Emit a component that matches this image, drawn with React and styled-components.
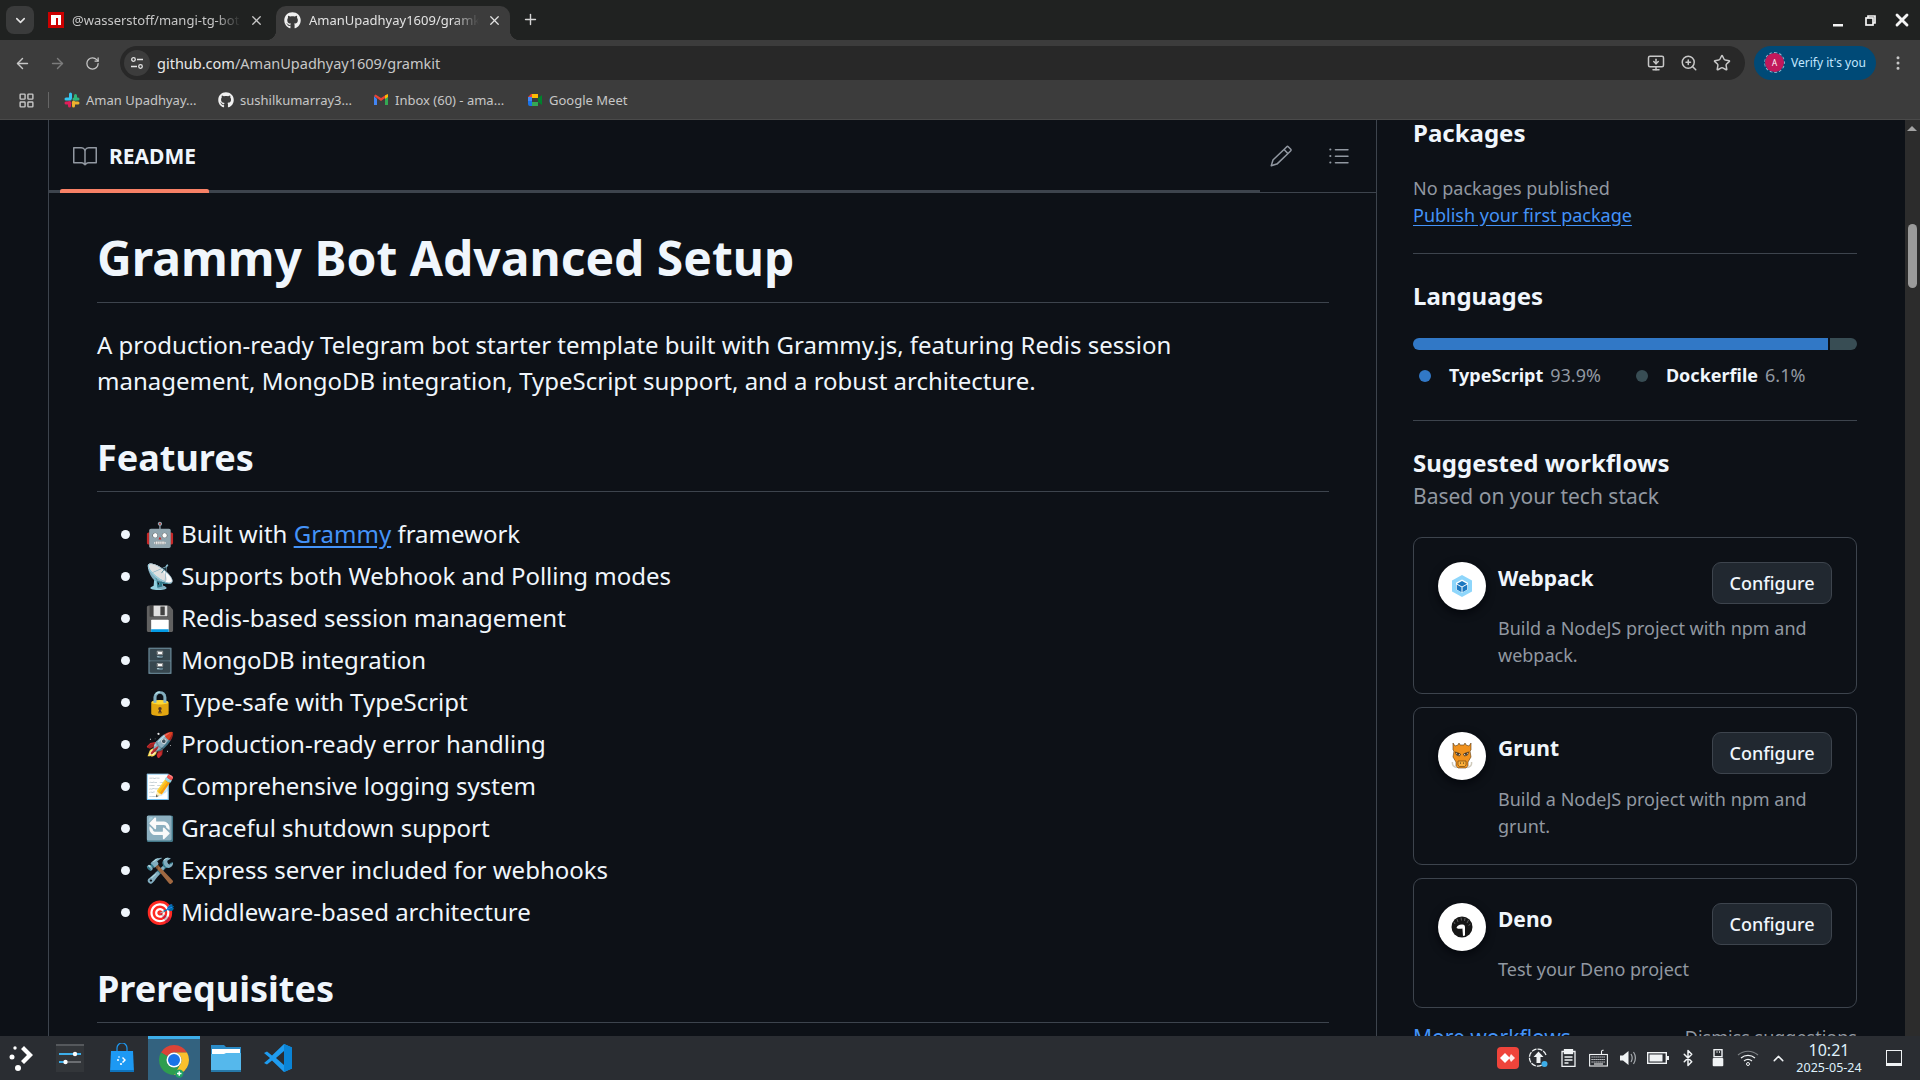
import React from "react"
import styled, { createGlobalStyle } from "styled-components"
import { FaGithub } from "react-icons/fa"
import { GoBook, GoPencil, GoListUnordered } from "react-icons/go"
import {
  ArrowLeft,
  ArrowRight,
  RotateCw,
  MonitorDown,
  ZoomIn,
  Star,
  Plus,
  X,
  ChevronDown,
  ChevronUp,
  LayoutGrid,
  EllipsisVertical,
  Bluetooth,
} from "lucide-react"

const GlobalStyle = createGlobalStyle`
  html, body {
    margin: 0;
    padding: 0;
    height: 100%;
    overflow: hidden;
    background: #0d1117;
  }
  body {
    font-family: "Noto Sans", "Noto Color Emoji", sans-serif;
    color: #f0f6fc;
  }
  * { box-sizing: border-box; }
`

const Screen = styled.div`
  display: flex;
  flex-direction: column;
  width: 1920px;
  height: 1080px;
  overflow: hidden;
`

/* browser chrome */
const TabStrip = styled.div`
  display: flex;
  align-items: flex-end;
  flex: none;
  height: 40px;
  padding-left: 6px;
  background: #202221;
`
const TabMenu = styled.div`
  display: flex;
  align-items: center;
  justify-content: center;
  align-self: flex-start;
  width: 28px;
  height: 28px;
  margin: 6px 8px 0 0;
  border-radius: 8px;
  background: #3a3b3b;
  color: #e3e3e3;
`
const Tab = styled.div`
  position: relative;
  display: flex;
  align-items: center;
  width: ${(props) => props.$width}px;
  height: 34px;
  padding: ${(props) => props.$pad};
  gap: 8px;
  border-radius: 10px 10px 0 0;
  font-size: 13px;
  color: ${(props) => (props.$active ? "#e3e3e3" : "#c7c7c7")};
  background: ${(props) => (props.$active ? "#3c3c3c" : "transparent")};

  ${(props) =>
    props.$active &&
    `
    &::before, &::after {
      content: "";
      position: absolute;
      bottom: 0;
      width: 10px;
      height: 10px;
    }
    &::before {
      left: -10px;
      background: radial-gradient(circle at 0 0, transparent 10px, #3c3c3c 10.5px);
    }
    &::after {
      right: -10px;
      background: radial-gradient(circle at 100% 0, transparent 10px, #3c3c3c 10.5px);
    }
  `}
`
const TabTitle = styled.span`
  flex: 1;
  overflow: hidden;
  white-space: nowrap;
  -webkit-mask-image: linear-gradient(to right, #000 85%, transparent 100%);
  mask-image: linear-gradient(to right, #000 85%, transparent 100%);
`
const NewTab = styled.div`
  display: flex;
  align-self: flex-start;
  margin: 11px 0 0 12px;
  color: #d5d5d5;
`
const WindowControls = styled.div`
  display: flex;
  align-items: center;
  align-self: flex-start;
  height: 40px;
  margin-left: auto;
  padding-right: 2px;
  color: #f4f4f4;
`
const WindowButton = styled.div`
  display: flex;
  align-items: center;
  justify-content: center;
  width: 32px;
`
const Toolbar = styled.div`
  display: flex;
  align-items: flex-start;
  flex: none;
  height: 41px;
  padding: 6px 12px 0 10px;
  background: #3c3c3c;
  color: #c7c7c7;
`
const NavButtons = styled.div`
  display: flex;
  align-items: center;
  gap: 18.5px;
  width: 110px;
  height: 34px;
  padding-left: 3.5px;
  color: #c7c7c7;
`
const Omnibox = styled.div`
  display: flex;
  align-items: center;
  width: 1625px;
  height: 34px;
  padding: 0 14px 0 4px;
  border-radius: 17px;
  background: #282828;
`
const SiteInfo = styled.div`
  display: flex;
  align-items: center;
  justify-content: center;
  width: 26px;
  height: 26px;
  border-radius: 50%;
  background: #3c3c3c;
  color: #e3e3e3;
`
const Url = styled.div`
  margin-left: 7px;
  padding-bottom: 1px;
  font-size: 14.5px;
  color: #c7c7c7;

  b {
    font-weight: 400;
    color: #e8e8e8;
  }
`
const OmniIcons = styled.div`
  display: flex;
  align-items: center;
  gap: 15px;
  margin-left: auto;
  color: #c7c7c7;
`
const ProfileChip = styled.div`
  display: flex;
  align-items: center;
  gap: 7px;
  width: 122px;
  height: 34px;
  margin-left: 9px;
  padding: 0 0 1px 11px;
  border-radius: 17px;
  background: #004a77;
  color: #c2e7ff;
  font-size: 12px;
  white-space: nowrap;
`
const ProfileAvatar = styled.div`
  display: flex;
  align-items: center;
  justify-content: center;
  width: 19px;
  height: 19px;
  border-radius: 50%;
  outline: 1px dashed #8fb4cc;
  background: #c2185b;
  color: #fff;
  font-size: 8px;
`
const Kebab = styled.div`
  display: flex;
  align-items: center;
  height: 34px;
  margin-left: 13px;
  color: #c7c7c7;
`
const BookmarkBar = styled.div`
  display: flex;
  align-items: center;
  flex: none;
  height: 39px;
  padding-left: 18px;
  background: #3c3c3c;
  border-bottom: 1px solid #4a4a4a;
  font-size: 13px;
  color: #c7c7c7;
`
const BarSeparator = styled.div`
  width: 1px;
  height: 16px;
  margin: 0 15px 0 13px;
  background: #666;
`
const Bookmark = styled.div`
  display: flex;
  align-items: center;
  gap: 6px;
  width: ${(props) => props.$width}px;
  white-space: nowrap;
`

/* page */
const Page = styled.div`
  display: grid;
  grid-template-columns: 48px 1329px minmax(0, 1fr) 15px;
  flex: 1;
  min-height: 0;
  overflow: hidden;
  background: #0d1117;
`
const ReadmeBox = styled.section`
  min-height: 0;
  border-left: 1px solid #3d444d;
  border-right: 1px solid #3d444d;
`
const ReadmeHeader = styled.div`
  position: relative;
  display: flex;
  align-items: center;
  height: 73px;
  padding: 0 24px;
  border-bottom: 1px solid #3d444d;
  color: #9198a1;

  &::before {
    content: "";
    position: absolute;
    left: 0;
    bottom: -1px;
    width: 1211px;
    height: 3px;
    background: #3d444d;
  }
`
const ReadmeTab = styled.div`
  display: flex;
  align-items: center;
  gap: 12px;
  font-size: 21px;
  font-weight: 700;
  color: #f0f6fc;

  &::after {
    content: "";
    position: absolute;
    left: 11px;
    bottom: -1px;
    width: 149px;
    height: 4px;
    background: #f78166;
    border-radius: 2px 2px 0 0;
  }
`
const HeaderActions = styled.div`
  display: flex;
  align-items: center;
  gap: 33px;
  margin-left: auto;
`
const Markdown = styled.article`
  padding: 35px 47px 0 48px;
  font-size: 24px;
  line-height: 36px;
`
const H1 = styled.h1`
  margin: 0 0 24px;
  padding-bottom: 14.4px;
  border-bottom: 1px solid #3d444d;
  font-size: 48px;
  line-height: 60px;
  font-weight: 700;
`
const H2 = styled.h2`
  margin: 36px 0 24px;
  padding-bottom: 10.8px;
  border-bottom: 1px solid #3d444d;
  font-size: 36px;
  line-height: 45px;
  font-weight: 700;
`
const Paragraph = styled.p`
  margin: 0 0 24px;
`
const List = styled.ul`
  margin: 0 0 24px;
  padding-left: 48px;
`
const Item = styled.li`
  height: 36px;
  margin-top: ${(props) => (props.$first ? 0 : 6)}px;
`
const Link = styled.a`
  color: #4493f8;
  text-decoration: underline;
  text-underline-offset: 3px;
`

/* right column */
const Sidebar = styled.aside`
  padding: 0 48px 0 36px;
  margin-top: -5px;
  font-size: 18px;
  line-height: 27px;
`
const SideTitle = styled.h2`
  margin: 0;
  font-size: 24px;
  line-height: 36px;
  font-weight: 700;
`
const Muted = styled.div`
  margin-top: ${(props) => props.$top || 0}px;
  font-size: ${(props) => props.$size || 18}px;
  color: #9198a1;
`
const SideRule = styled.hr`
  height: 1px;
  margin: ${(props) => props.$top}px 0 24px;
  border: 0;
  background: #3d444d;
`
const LangBar = styled.div`
  display: flex;
  gap: 2px;
  height: 12px;
  margin-top: 24px;
  border-radius: 6px;
  overflow: hidden;
`
const LangPart = styled.span`
  display: block;
  width: ${(props) => props.$pct}%;
  background: ${(props) => props.$color};
`
const Legend = styled.div`
  display: flex;
  gap: 35px;
  margin-top: 12.5px;
  padding-left: 6px;
`
const LegendItem = styled.div`
  display: flex;
  align-items: center;
  color: #9198a1;

  b {
    margin-right: 7px;
    font-weight: 700;
    color: #f0f6fc;
  }
`
const Dot = styled.span`
  width: 12px;
  height: 12px;
  margin-right: 18px;
  border-radius: 50%;
  background: ${(props) => props.$color};
`
const Cards = styled.div`
  display: flex;
  flex-direction: column;
  gap: 13px;
  margin-top: 27px;
`
const Card = styled.div`
  display: flex;
  gap: 12px;
  padding: 24px;
  border: 1px solid #3d444d;
  border-radius: 9px;
`
const CardLogo = styled.div`
  display: flex;
  align-items: center;
  justify-content: center;
  flex: none;
  width: 48px;
  height: 48px;
  border-radius: 50%;
  background: #fff;
  box-shadow: 0 3px 9px rgba(1, 4, 9, 0.8);
`
const CardBody = styled.div`
  flex: 1;
`
const CardHead = styled.div`
  display: flex;
  justify-content: space-between;
  align-items: flex-start;
  margin-bottom: 11.5px;
`
const CardName = styled.div`
  font-size: 21px;
  line-height: 32px;
  font-weight: 700;
`
const ConfigureButton = styled.button`
  width: 120px;
  height: 42px;
  padding: 0;
  border: 1px solid #3d444d;
  border-radius: 9px;
  background: #212830;
  color: #f0f6fc;
  font: 500 18px "Noto Sans", sans-serif;
`
const CardFoot = styled.div`
  display: flex;
  justify-content: space-between;
  margin-top: 16px;
`
const FootLink = styled.a`
  color: #4493f8;
  font-size: 21px;
`
const Scrollbar = styled.div`
  position: relative;
  background: #2c2c2c;
`
const ScrollThumb = styled.div`
  position: absolute;
  left: 3px;
  top: 104px;
  width: 9px;
  height: 64px;
  border-radius: 5px;
  background: #9b9b9b;
`
const ScrollArrow = styled.div`
  position: absolute;
  left: 2px;
  ${(props) => (props.$down ? "bottom: 4px" : "top: 6px")};
  border-left: 5px solid transparent;
  border-right: 5px solid transparent;
  ${(props) => (props.$down ? "border-top: 5px solid #a3a3a3" : "border-bottom: 5px solid #a3a3a3")};
`

/* taskbar */
const Taskbar = styled.div`
  display: flex;
  align-items: center;
  flex: none;
  height: 44px;
  background: #2a2d32;
  color: #f0f3f5;
`
const TaskSlot = styled.div`
  display: flex;
  align-items: center;
  justify-content: center;
  width: ${(props) => props.$width || 52}px;
  height: 44px;
  background: ${(props) => (props.$active ? "#33627f" : "transparent")};
  border-top: ${(props) => (props.$active ? "3px solid #3daee9" : "0")};
`
const Tray = styled.div`
  display: flex;
  align-items: center;
  gap: 10px;
  margin-left: auto;
  padding-right: 18px;
`
const TrayIcon = styled.div`
  display: flex;
  justify-content: center;
  width: 20px;
  color: #f0f3f5;

  svg {
    flex: none;
  }
`
const Clock = styled.div`
  width: 78px;
  margin-left: -8px;
  text-align: center;
  color: #dff0fa;
`
const ClockTime = styled.div`
  font-size: 16px;
  line-height: 19px;
`
const ClockDate = styled.div`
  font-size: 12.5px;
  line-height: 15px;
`
const ShowDesktop = styled.div`
  width: 16px;
  height: 16px;
  margin-left: 8px;
  border: 1.5px solid #f0f3f5;
  border-bottom-width: 3px;
`

const NpmIcon = () => (
  <svg width="16" height="16" viewBox="0 0 16 16">
    <rect width="16" height="16" fill="#cb0000" />
    <path d="M3 3h10v10h-3V6H8v7H3z" fill="#fff" />
  </svg>
)
const SlackIcon = () => (
  <svg width="16" height="16" viewBox="0 0 16 16">
    <rect x="5" y="0.5" width="3" height="7" rx="1.5" fill="#36c5f0" />
    <rect x="0.5" y="5.5" width="7" height="3" rx="1.5" fill="#36c5f0" />
    <rect x="10" y="2" width="3" height="6.5" rx="1.5" fill="#2eb67d" />
    <rect x="8.5" y="5.5" width="7" height="3" rx="1.5" fill="#2eb67d" />
    <rect x="8" y="8.5" width="3" height="7" rx="1.5" fill="#ecb22e" />
    <rect x="8.5" y="9.5" width="7" height="3" rx="1.5" fill="#ecb22e" />
    <rect x="4" y="9" width="3" height="6.5" rx="1.5" fill="#e01e5a" />
    <rect x="0.5" y="9.5" width="7" height="3" rx="1.5" fill="#e01e5a" />
  </svg>
)
const GmailIcon = () => (
  <svg width="16" height="16" viewBox="0 0 16 16">
    <path d="M1 4v9h3V7z" fill="#4285f4" />
    <path d="M12 7v6h3V4z" fill="#34a853" />
    <path d="M1 4l7 5 7-5-1.5-1.5L8 6 2.5 2.5z" fill="#ea4335" />
    <path d="M12 3.5L15 2v3l-3 2z" fill="#fbbc04" />
  </svg>
)
const MeetIcon = () => (
  <svg width="16" height="16" viewBox="0 0 16 16">
    <path d="M4 2h7v4H5v3H1V5z" fill="#ea4335" />
    <path d="M1 5h4v6H1z" fill="#4285f4" />
    <path d="M1 9h4v2h6v3H3a2 2 0 0 1-2-2z" fill="#1a73e8" />
    <path d="M11 2v4H5V2z" fill="#fbbc04" />
    <path d="M5 10h6v4H5z" fill="#34a853" />
    <path d="M11 6l4-3v10l-4-3z" fill="#00832d" />
  </svg>
)
const WebpackLogo = () => (
  <svg width="24" height="24" viewBox="0 0 24 24">
    <path d="M12 1l10 5.5v11L12 23 2 17.5v-11z" fill="#8ed6fb" />
    <path d="M12 5.5l6 3.3v6.6l-6 3.3-6-3.3V8.8z" fill="#fff" />
    <path d="M12 7l5 2.8-5 2.8-5-2.8zM6.7 10.6l4.8 2.7v5l-4.8-2.7zM17.3 10.6v5l-4.8 2.7v-5z" fill="#1c78c0" />
  </svg>
)
const GruntLogo = () => (
  <svg width="22" height="28" viewBox="0 0 22 28">
    <path d="M2 1l2 3 3-1 1-2 1 2h4l1-2 1 2 3 1 2-3 0 7-1 1 1 6-3 5v4l-2 2H7l-2-2v-4l-3-5 1-6-1-1z" fill="#f0921e" stroke="#5a3a10" strokeWidth=".6" />
    <path d="M4.5 10l5 2-1 2-3-1zM17.5 10l-5 2 1 2 3-1z" fill="#fff" stroke="#3a2508" strokeWidth=".8" />
    <circle cx="7" cy="12" r="1" fill="#22160a" />
    <circle cx="15" cy="12" r="1" fill="#22160a" />
    <path d="M7 19h8v4l-1.5 1.5h-5L7 23z" fill="#fbb03b" stroke="#5a3a10" strokeWidth=".6" />
    <path d="M9.5 21h.01M12.5 21h.01" stroke="#22160a" strokeWidth="1.2" strokeLinecap="round" />
    <path d="M1.5 20c-.5 3 1 5 4.5 5.5M20.5 20c.5 3-1 5-4.5 5.5" stroke="#cfcabb" strokeWidth="1.5" fill="none" />
  </svg>
)
const DenoLogo = () => (
  <svg width="22" height="22" viewBox="0 0 22 22">
    <circle cx="11" cy="11" r="10.5" fill="#161616" />
    <path d="M3 6l1 2M6 3l1 3M10 1.5l.5 3M14 2l-.5 3M17.5 4l-1.5 3M19.5 8l-2 1.5" stroke="#777" strokeWidth=".7" />
    <path d="M5.5 12c.5-2.500 3-3.800 6-3.500 1.800.2 2.500 1.200 2.500 2.800v8.200l-2 .6-.6-7.600c-2 .5-4 .5-5.900-.5z" fill="#fff" />
  </svg>
)
const KdeLogo = () => (
  <svg width="26" height="30" viewBox="0 0 26 30">
    <circle cx="6" cy="5" r="1.7" fill="#fff" />
    <circle cx="3" cy="14" r="2.5" fill="#fff" />
    <circle cx="9" cy="25" r="3" fill="#fff" />
    <path d="M15 3l9 9-9 9-3-3 6-6-6-6z" fill="#fff" />
  </svg>
)
const SettingsLogo = () => (
  <svg width="28" height="28" viewBox="0 0 28 28">
    <rect width="28" height="28" fill="#33363a" />
    <path d="M0 0h28v2H0z" fill="#55585c" />
    <rect x="3" y="9" width="22" height="2" fill="#3daee9" />
    <rect x="3" y="17" width="22" height="2" fill="#6b6e72" />
    <rect x="3" y="17" width="8" height="2" fill="#3daee9" />
    <circle cx="19" cy="10" r="2.2" fill="#fcfcfc" />
    <circle cx="9.5" cy="18" r="2.2" fill="#fcfcfc" />
  </svg>
)
const StoreLogo = () => (
  <svg width="24" height="30" viewBox="0 0 24 30">
    <path d="M7 8V5a5 5 0 0 1 10 0v3" stroke="#1d99f3" strokeWidth="1.2" fill="none" />
    <path d="M1 8h22l1 21H0z" fill="#1d99f3" />
    <path d="M0 27h24v2H0z" fill="#0e73bd" />
    <path d="M13 14l3 3-3 3-1-1 2-2-2-2z" fill="#fff" />
    <circle cx="9" cy="14" r=".8" fill="#fff" />
    <circle cx="8" cy="17" r="1" fill="#fff" />
    <circle cx="11" cy="21" r="1.1" fill="#fff" />
  </svg>
)
const ChromeLogo = () => (
  <svg width="36" height="36" viewBox="0 0 48 48">
    <path d="M24 4A20 20 0 0 1 41.32 14H24a10 10 0 0 0-8.66 5L6.68 14A20 20 0 0 1 24 4z" fill="#db4437" />
    <path d="M41.32 14A20 20 0 0 1 24 44L32.66 29A10 10 0 0 0 24 14z" fill="#fbc02d" />
    <path d="M24 44A20 20 0 0 1 6.68 14L15.34 19A10 10 0 0 0 32.66 29z" fill="#2e9e4f" />
    <circle cx="24" cy="24" r="10" fill="#fff" />
    <circle cx="24" cy="24" r="8" fill="#1a73e8" />
    <circle cx="31" cy="42" r="5.5" fill="#1fa463" />
    <path d="M31 39v6M28 42h6" stroke="#fff" strokeWidth="1.8" />
  </svg>
)
const FolderLogo = () => (
  <svg width="30" height="28" viewBox="0 0 30 28">
    <path d="M0 1h13l2 2h15v25H0z" fill="#2a8bc7" />
    <rect x="1" y="5" width="28" height="5" fill="#fff" />
    <path d="M0 10h13l2-1h15v19H0z" fill="#55b8ec" />
    <path d="M0 26h30v2H0z" fill="#2678a8" />
  </svg>
)
const VsCodeLogo = () => (
  <svg width="28" height="28" viewBox="0 0 28 28">
    <path d="M20 0l8 3.5v21L20 28 8 16.5l-5 4-3-1.500 6-5-6-5 3-1.500 5 4z" fill="#1f9cf0" />
    <path d="M20 7l-8 7 8 7z" fill="#2a2d32" />
    <path d="M20 0l8 3.5v21L20 28z" fill="#0a84d6" />
  </svg>
)
const AnyDeskIcon = () => (
  <svg width="22" height="22" viewBox="0 0 22 22">
    <rect width="22" height="22" rx="4" fill="#ef443b" />
    <path d="M8 6l5 5-5 5-5-5z" fill="#fff" />
    <path d="M14 7l4 4-4 4-2-4z" fill="#fff" opacity=".9" />
  </svg>
)
const UpdateIcon = () => (
  <svg width="22" height="22" viewBox="0 0 22 22" fill="none">
    <path d="M19 8a8.5 8.5 0 1 0-2.5 9" stroke="#f0f3f5" strokeWidth="1.3" strokeDasharray="5 1" />
    <path d="M11.5 4.5l5 5.500h-3v6h-4v-6h-3z" fill="#f0f3f5" />
    <circle cx="17.5" cy="17" r="3" fill="#3daee9" />
  </svg>
)
const ClipboardIcon = () => (
  <svg width="15" height="18" viewBox="0 0 15 18" fill="none" stroke="#f0f3f5" strokeWidth="1.3">
    <path d="M4 2.5H1v15h13v-15h-3" />
    <rect x="3.5" y=".5" width="8" height="4" fill="#f0f3f5" />
    <path d="M3.5 8h8M3.5 11h8M3.5 14h4" />
  </svg>
)
const KeyboardIcon = () => (
  <svg width="19" height="18" viewBox="0 0 19 18" fill="none" stroke="#f0f3f5" strokeWidth="1.1">
    <path d="M12.5 5V2.500c0-1 1-1 2-1.500" />
    <rect x=".6" y="5.5" width="17.8" height="11.5" />
    <path d="M2.5 8h14M2.500 10.500h14M2.500 13h14" strokeDasharray="1.2 .8" />
    <path d="M5 15h9" />
  </svg>
)
const VolumeIcon = () => (
  <svg width="18" height="18" viewBox="0 0 18 18" fill="none">
    <path d="M1 6.5h3L9.500 2v14L4 11.500H1z" fill="#f0f3f5" />
    <path d="M12 5c1.500 2.500 1.500 5.500 0 8M14.500 3c2.500 3.500 2.500 8.500 0 12" stroke="#a9adb1" strokeWidth="1.2" />
  </svg>
)
const BatteryIcon = () => (
  <svg width="22" height="12" viewBox="0 0 22 12">
    <rect x=".7" y=".7" width="18.6" height="10.6" fill="none" stroke="#f0f3f5" strokeWidth="1.4" />
    <rect x="2.5" y="2.5" width="13" height="7" fill="#f0f3f5" />
    <rect x="20" y="4" width="2" height="4" fill="#f0f3f5" />
  </svg>
)
const UsbIcon = () => (
  <svg width="12" height="18" viewBox="0 0 12 18" fill="none">
    <rect x="2" y=".7" width="8" height="7" stroke="#f0f3f5" strokeWidth="1.4" />
    <path d="M4.5 3h1M7 3h1" stroke="#f0f3f5" strokeWidth="1.4" />
    <rect x=".7" y="9" width="10.6" height="8.3" rx="1" fill="#f0f3f5" />
  </svg>
)
const WifiIcon = () => (
  <svg width="22" height="16" viewBox="0 0 22 16" fill="none">
    <path d="M1 5c6-5 14-5 20 0" stroke="#7d8185" strokeWidth="1.2" />
    <path d="M4 8c4-3.500 10-3.500 14 0" stroke="#f0f3f5" strokeWidth="1.2" />
    <path d="M7 11c2.500-2 5.500-2 8 0" stroke="#f0f3f5" strokeWidth="1.2" />
    <circle cx="11" cy="14" r="1.5" stroke="#f0f3f5" />
  </svg>
)
const MinimizeIcon = () => (
  <svg width="10" height="14" viewBox="0 0 10 14">
    <rect y="11" width="10" height="2.5" fill="currentColor" />
  </svg>
)
const RestoreIcon = () => (
  <svg width="11" height="11" viewBox="0 0 11 11" fill="none" stroke="currentColor" strokeWidth="1.7">
    <path d="M3 3V1h7v7H8" />
    <rect x="1" y="3" width="7" height="7" />
  </svg>
)

const FEATURES = [
  ["🤖", <>Built with <Link>Grammy</Link> framework</>],
  ["📡", "Supports both Webhook and Polling modes"],
  ["💾", "Redis-based session management"],
  ["🗄️", "MongoDB integration"],
  ["🔒", "Type-safe with TypeScript"],
  ["🚀", "Production-ready error handling"],
  ["📝", "Comprehensive logging system"],
  ["🔄", "Graceful shutdown support"],
  ["🛠️", "Express server included for webhooks"],
  ["🎯", "Middleware-based architecture"],
]

const WORKFLOWS = [
  { name: "Webpack", logo: <WebpackLogo />, text: "Build a NodeJS project with npm and webpack." },
  { name: "Grunt", logo: <GruntLogo />, text: "Build a NodeJS project with npm and grunt." },
  { name: "Deno", logo: <DenoLogo />, text: "Test your Deno project" },
]

const App = () => (
  <Screen>
    <GlobalStyle />
    <TabStrip>
      <TabMenu>
        <ChevronDown size={15} strokeWidth={2.5} />
      </TabMenu>
      <Tab $width={234} $pad="0 12px 6px 6px">
        <NpmIcon />
        <TabTitle>@wasserstoff/mangi-tg-bot</TabTitle>
        <X size={15} />
      </Tab>
      <Tab $width={234} $pad="0 8px 6px 8px" $active>
        <FaGithub size={17} color="#f0f0f0" />
        <TabTitle>AmanUpadhyay1609/gramkit</TabTitle>
        <X size={15} />
      </Tab>
      <NewTab>
        <Plus size={17} />
      </NewTab>
      <WindowControls>
        <WindowButton><MinimizeIcon /></WindowButton>
        <WindowButton><RestoreIcon /></WindowButton>
        <WindowButton><X size={20} strokeWidth={3.4} /></WindowButton>
      </WindowControls>
    </TabStrip>
    <Toolbar>
      <NavButtons>
        <ArrowLeft size={17} />
        <ArrowRight size={17} color="#7c7c7c" />
        <RotateCw size={15} />
      </NavButtons>
      <Omnibox>
        <SiteInfo>
          <svg width="14" height="14" viewBox="0 0 14 14" fill="none" stroke="currentColor" strokeWidth="1.3">
            <circle cx="3.5" cy="3.5" r="1.8" />
            <path d="M7 3.5h6M1 10.5h6" />
            <circle cx="10.5" cy="10.5" r="1.8" />
          </svg>
        </SiteInfo>
        <Url>
          <b>github.com</b>/AmanUpadhyay1609/gramkit
        </Url>
        <OmniIcons>
          <MonitorDown size={18} />
          <ZoomIn size={18} />
          <Star size={18} />
        </OmniIcons>
      </Omnibox>
      <ProfileChip>
        <ProfileAvatar>A</ProfileAvatar>
        Verify it's you
      </ProfileChip>
      <Kebab>
        <EllipsisVertical size={18} />
      </Kebab>
    </Toolbar>
    <BookmarkBar>
      <LayoutGrid size={17} />
      <BarSeparator />
      <Bookmark $width={154}><SlackIcon />Aman Upadhyay...</Bookmark>
      <Bookmark $width={155}><FaGithub size={16} color="#f0f0f0" />sushilkumarray3...</Bookmark>
      <Bookmark $width={154}><GmailIcon />Inbox (60) - ama...</Bookmark>
      <Bookmark $width={120}><MeetIcon />Google Meet</Bookmark>
    </BookmarkBar>

    <Page>
      <div />
      <ReadmeBox>
        <ReadmeHeader>
          <ReadmeTab>
            <GoBook size={24} color="#9198a1" />
            README
          </ReadmeTab>
          <HeaderActions>
            <GoPencil size={24} />
            <GoListUnordered size={26} />
          </HeaderActions>
        </ReadmeHeader>
        <Markdown>
          <H1>Grammy Bot Advanced Setup</H1>
          <Paragraph>
            A production-ready Telegram bot starter template built with Grammy.js, featuring Redis session
            management, MongoDB integration, TypeScript support, and a robust architecture.
          </Paragraph>
          <H2>Features</H2>
          <List>
            {FEATURES.map(([emoji, text], i) => (
              <Item key={i} $first={i === 0}>
                {emoji} {text}
              </Item>
            ))}
          </List>
          <H2>Prerequisites</H2>
        </Markdown>
      </ReadmeBox>
      <Sidebar>
        <SideTitle>Packages</SideTitle>
        <Muted $top={23.5}>No packages published</Muted>
        <Link>Publish your first package</Link>
        <SideRule $top={24} />
        <SideTitle>Languages</SideTitle>
        <LangBar>
          <LangPart $pct={93.9} $color="#3178c6" />
          <LangPart $pct={6.1} $color="#384d54" />
        </LangBar>
        <Legend>
          <LegendItem><Dot $color="#3178c6" /><b>TypeScript</b>93.9%</LegendItem>
          <LegendItem><Dot $color="#384d54" /><b>Dockerfile</b>6.1%</LegendItem>
        </Legend>
        <SideRule $top={31} />
        <SideTitle>Suggested workflows</SideTitle>
        <Muted $size={21} $top={1.5}>Based on your tech stack</Muted>
        <Cards>
          {WORKFLOWS.map((flow) => (
            <Card key={flow.name}>
              <CardLogo>{flow.logo}</CardLogo>
              <CardBody>
                <CardHead>
                  <CardName>{flow.name}</CardName>
                  <ConfigureButton>Configure</ConfigureButton>
                </CardHead>
                <Muted>{flow.text}</Muted>
              </CardBody>
            </Card>
          ))}
        </Cards>
        <CardFoot>
          <FootLink>More workflows</FootLink>
          <Muted>Dismiss suggestions</Muted>
        </CardFoot>
      </Sidebar>
      <Scrollbar>
        <ScrollArrow />
        <ScrollThumb />
        <ScrollArrow $down />
      </Scrollbar>
    </Page>

    <Taskbar>
      <TaskSlot $width={44}><KdeLogo /></TaskSlot>
      <TaskSlot><SettingsLogo /></TaskSlot>
      <TaskSlot><StoreLogo /></TaskSlot>
      <TaskSlot $active><ChromeLogo /></TaskSlot>
      <TaskSlot><FolderLogo /></TaskSlot>
      <TaskSlot><VsCodeLogo /></TaskSlot>
      <Tray>
        <TrayIcon><AnyDeskIcon /></TrayIcon>
        <TrayIcon><UpdateIcon /></TrayIcon>
        <TrayIcon><ClipboardIcon /></TrayIcon>
        <TrayIcon><KeyboardIcon /></TrayIcon>
        <TrayIcon><VolumeIcon /></TrayIcon>
        <TrayIcon><BatteryIcon /></TrayIcon>
        <TrayIcon><Bluetooth size={18} /></TrayIcon>
        <TrayIcon><UsbIcon /></TrayIcon>
        <TrayIcon><WifiIcon /></TrayIcon>
        <TrayIcon><ChevronUp size={17} /></TrayIcon>
        <Clock>
          <ClockTime>10:21</ClockTime>
          <ClockDate>2025-05-24</ClockDate>
        </Clock>
        <ShowDesktop />
      </Tray>
    </Taskbar>
  </Screen>
)

export default App
